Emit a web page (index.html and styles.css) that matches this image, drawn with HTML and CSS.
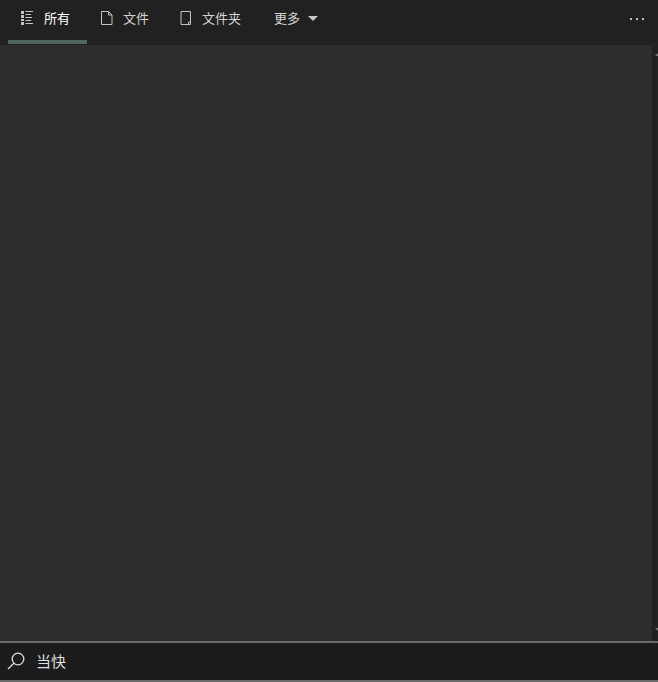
FILE: index.html
```html
<!DOCTYPE html>
<html lang="zh-CN">
<head>
<meta charset="UTF-8">
<title>搜索</title>
<link rel="stylesheet" href="styles.css">
</head>
<body>
  <div class="window">
    <div class="tabs">
      <div class="tab tab-active">
        <svg class="icon" width="14" height="14" viewBox="0 0 14 14" fill="none" stroke="currentColor" stroke-width="1">
          <path stroke-width="3" d="M2.500 0v3M2.500 4v3M2.500 8v2M2.500 11v3"/>
          <path d="M5.500 .5H13M5.500 3.500H11M5.500 6.500H12M5.500 9.500H11M5.500 12.500H13"/>
        </svg>
        <span>所有</span>
      </div>
      <div class="tab tab-file">
        <svg class="icon" width="12" height="14" viewBox="0 0 12 14" fill="none" stroke="currentColor" stroke-width="1">
          <path d="M.5 .5h7l3.500 3.500v9.500H.5zM7.500 .5V4H11"/>
        </svg>
        <span>文件</span>
      </div>
      <div class="tab tab-folder">
        <svg class="icon" width="12" height="14" viewBox="0 0 12 14" fill="none" stroke="currentColor" stroke-width="1">
          <path d="M1 .5h9.500v13H1zM8.500 13.500v-2.500h2"/>
        </svg>
        <span>文件夹</span>
      </div>
      <div class="tab tab-more">
        <span>更多</span>
        <span class="caret"></span>
      </div>
      <div class="dots">
        <span></span><span></span><span></span>
      </div>
    </div>

    <div class="results">
      <div class="scrollbar">
        <span class="arrow arrow-up"></span>
        <span class="arrow arrow-down"></span>
      </div>
    </div>

    <div class="search">
      <svg class="search-icon" width="18" height="18" viewBox="0 0 18 18" fill="none" stroke="currentColor" stroke-width="1.300">
        <circle cx="11" cy="7" r="5.800"/>
        <path d="M6.800 11.200L1 17"/>
      </svg>
      <span class="query">当快</span>
    </div>
  </div>
</body>
</html>
```

FILE: styles.css
```css
html, body {
  margin: 0;
  padding: 0;
  background-color: #2d2d2d;
}

.window {
  width: 658px;
  height: 682px;
  display: flex;
  flex-direction: column;
  overflow: hidden;
  font-family: "Noto Sans CJK SC", "Liberation Sans", sans-serif;
  color: #d4d4d4;
}

/* top tab bar */
.tabs {
  height: 45px;
  flex: none;
  display: flex;
  align-items: flex-start;
  padding-left: 8px;
  background-color: #212121;
  font-size: 13px;
}

.tab {
  display: flex;
  align-items: center;
  box-sizing: border-box;
  height: 44px;
  padding-bottom: 9px;
}

.tab .icon {
  flex: none;
  color: #c4c4c4;
}

.tab-active {
  width: 79px;
  padding-left: 12px;
  gap: 10px;
  color: #ffffff;
  border-bottom: 4px solid #4f6660;
  padding-bottom: 5px;
}

.tab-file {
  margin-left: 14px;
  gap: 10px;
}

.tab-folder {
  margin-left: 31px;
  gap: 10px;
}

.tab-more {
  margin-left: 33px;
  gap: 8px;
}

.caret {
  width: 0;
  height: 0;
  margin-top: 2px;
  border-left: 5px solid transparent;
  border-right: 5px solid transparent;
  border-top: 5px solid #c8c8c8;
}

.dots {
  height: 44px;
  margin-left: auto;
  margin-right: 14px;
  padding-bottom: 7px;
  box-sizing: border-box;
  display: flex;
  align-items: center;
  gap: 4px;
}

.dots span {
  width: 2px;
  height: 2px;
  background-color: #c0c0c0;
}

/* empty result list */
.results {
  flex: 1;
  display: flex;
  justify-content: flex-end;
  background-color: #2d2d2d;
}

.scrollbar {
  width: 6px;
  display: flex;
  flex-direction: column;
  justify-content: space-between;
  background-color: #212121;
}

.arrow {
  width: 0;
  height: 0;
  margin: 8px 0 10px 3px;
  border-left: 3px solid transparent;
  border-right: 3px solid transparent;
}

.arrow-up {
  border-bottom: 3px solid #777777;
}

.arrow-down {
  border-top: 3px solid #777777;
}

/* search box */
.search {
  height: 35px;
  flex: none;
  display: flex;
  align-items: center;
  gap: 11px;
  padding-left: 7px;
  padding-bottom: 2px;
  background-color: #1c1c1c;
  border-top: 2px solid #6a6a6a;
  border-bottom: 2px solid #6a6a6a;
}

.search-icon {
  flex: none;
  color: #dcdcdc;
}

.query {
  font-size: 15px;
  color: #dedede;
}
```
